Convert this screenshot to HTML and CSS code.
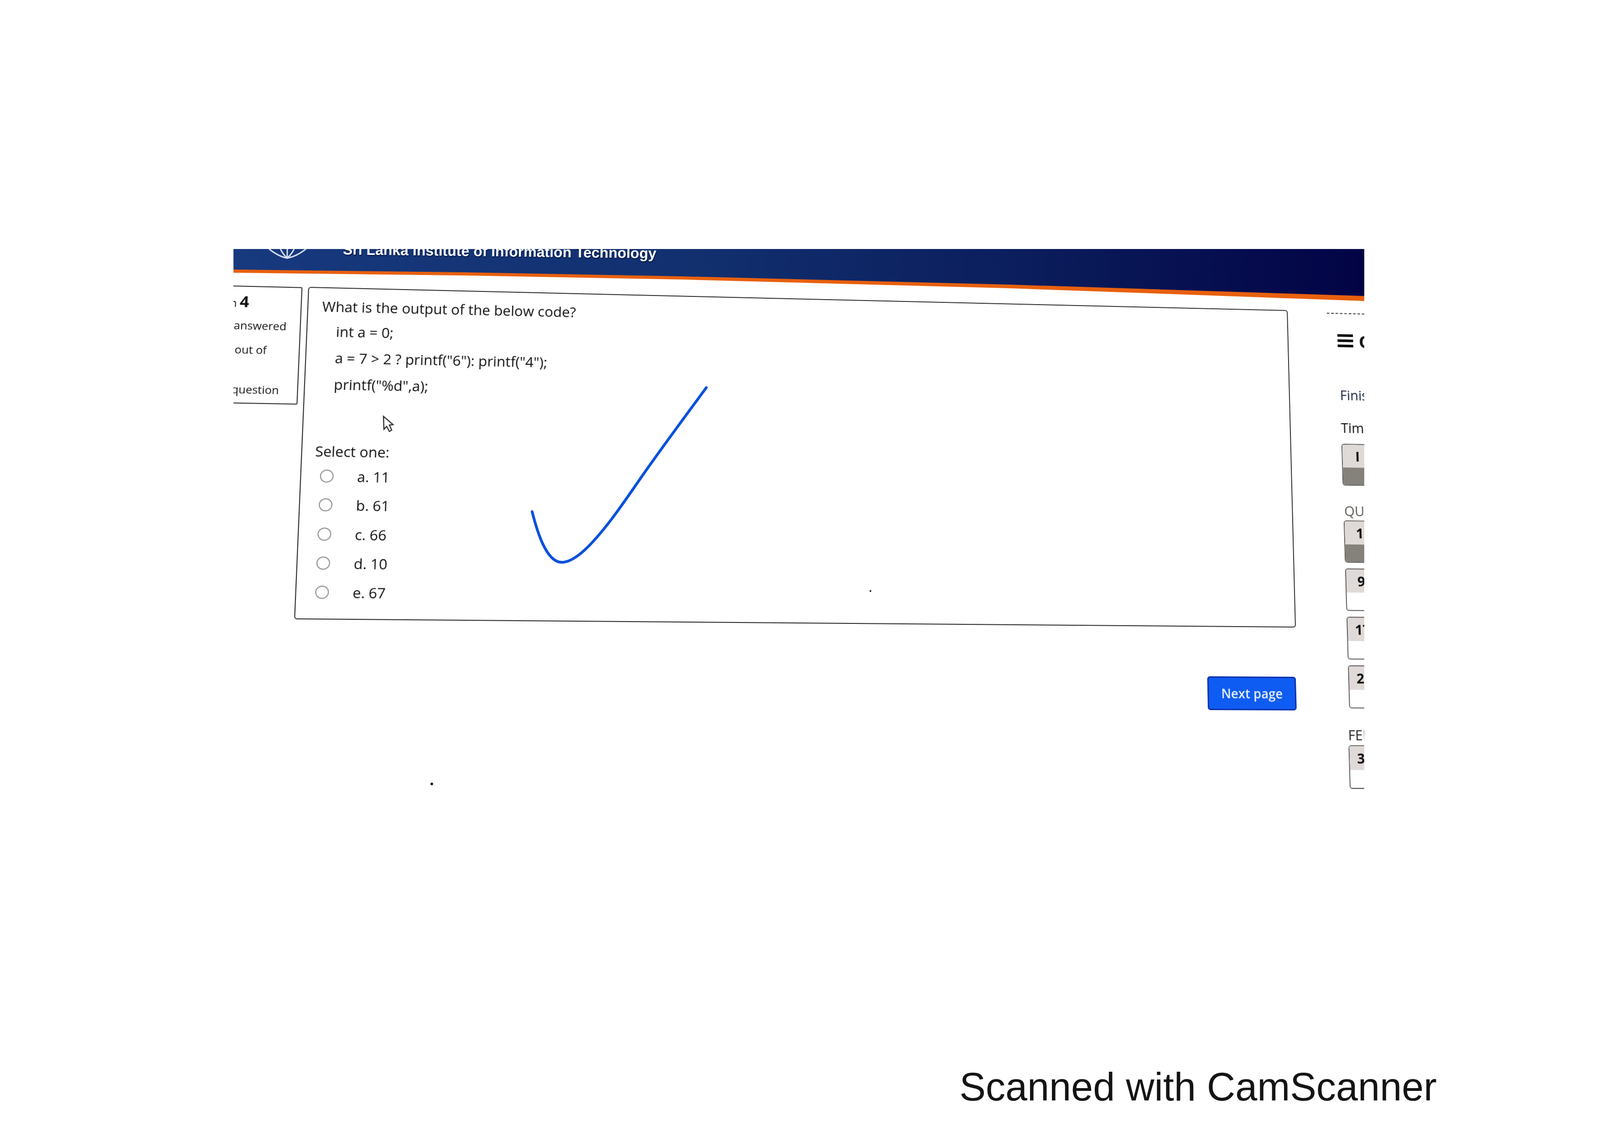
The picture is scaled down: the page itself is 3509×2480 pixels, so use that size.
FILE: index.html
```html
<!DOCTYPE html>
<html>
<head>
  <meta charset="utf-8">
  <title>Scanned quiz page</title>
  <link rel="stylesheet" href="styles.css">
</head>
<body>
  <div class="page">
    <div class="photo">
      <!-- Site banner -->
      <div class="banner">
        <div class="banner-fill">
          <svg class="crest" viewBox="0 0 90 22" width="90" height="22">
            <path d="M3 0Q25 17 43 20Q62 17 84 0M28 0Q34 12 43 20Q52 12 58 0M43 0V20"></path>
          </svg>
          <span class="banner-title">Sri Lanka Institute of Information Technology</span>
        </div>
      </div>

      <!-- The monitor, warped the way the camera saw it -->
      <div class="screen">
        <div class="info">
          <h3 class="info-title">Question <b>4</b></h3>
          <div class="info-line status">Not yet answered</div>
          <div class="info-line marks">Marked out of</div>
          <div class="info-line flag">Flag question</div>
        </div>

        <main class="content">
          <div class="card">
            <p class="prompt">What is the output of the below code?</p>
            <div class="code">
              <div>int a = 0;</div>
              <div>a = 7 &gt; 2 ? printf("6"): printf("4");</div>
              <div>printf("%d",a);</div>
            </div>
            <div class="select-label">Select one:</div>
            <label class="option"><input type="radio" name="answer">a. 11</label>
            <label class="option"><input type="radio" name="answer">b. 61</label>
            <label class="option"><input type="radio" name="answer">c. 66</label>
            <label class="option"><input type="radio" name="answer">d. 10</label>
            <label class="option"><input type="radio" name="answer">e. 67</label>
          </div>
          <button type="button" class="next-btn">Next page</button>
        </main>

        <aside class="side">
          <div class="side-rule"></div>
          <h2 class="side-title">
            <svg viewBox="0 0 36 30" width="36" height="30"><path d="M0 3H36M0 15H36M0 27H36"></path></svg>
            Quiz navigation
          </h2>
          <div class="side-text finish">Finish attempt</div>
          <div class="side-text timer">Time left</div>
          <div class="qbox done"><span>I</span><i></i></div>
          <div class="side-section quiz">QUIZ</div>
          <div class="qgrid">
            <div class="qbox done"><span>1</span><i></i></div>
            <div class="qbox"><span>9</span><i></i></div>
            <div class="qbox"><span>17</span><i></i></div>
            <div class="qbox"><span>25</span><i></i></div>
          </div>
          <div class="side-section feedback">FEEDBACK</div>
          <div class="qbox last"><span>33</span><i></i></div>
        </aside>
      </div>
    </div>

    <!-- Pen mark, mouse pointer and dust sit on top of the scan -->
    <svg class="marks-layer" viewBox="0 0 3509 2480">
      <path class="tick" d="M1167 1122C1178 1165 1198 1233 1232 1233C1262 1233 1300 1192 1340 1140C1372 1098 1401 1053 1430 1013C1470 957 1510 903 1549 850"></path>
      <path class="pointer" d="M841 913L842 941L848 935L854 946L859 943L854 932L862 931Z"></path>
      <circle class="dust" cx="947" cy="1719" r="3"></circle>
      <circle class="dust" cx="1909" cy="1296" r="2"></circle>
    </svg>

    <div class="scan-note">Scanned with CamScanner</div>
  </div>
</body>
</html>
```

FILE: styles.css
```css
/* Scan of a photographed quiz page */
body {
  margin: 0;
  background: #ffffff;
  font-family: 'Open Sans', 'Noto Sans', sans-serif;
  color: #111111;
}
.page {
  position: relative;
  display: flex;
  flex-direction: column;
  width: 3509px;
  height: 2480px;
  overflow: hidden;
}
.photo {
  position: relative;
  flex: none;
  width: 2480px;
  height: 1400px;
  margin: 546px 0 0 512px;
  overflow: hidden;
}

/* Banner */
.banner {
  position: absolute;
  top: 0;
  left: 0;
  z-index: 2;
  width: 100%;
  height: 120px;
  background: #e8600f;
  clip-path: polygon(0 0, 2480px 0, 2480px 114px, 1700px 86px, 988px 67px, 500px 58px, 0 52px);
}
.banner-fill {
  display: flex;
  height: 120px;
  background: linear-gradient(90deg, #17397e 0%, #12306f 40%, #0b1d5c 70%, #020345 100%);
  clip-path: polygon(0 0, 2480px 0, 2480px 103px, 1700px 78px, 988px 60px, 500px 51px, 0 45px);
}
.crest {
  flex: none;
  margin-left: 75px;
}
.crest path {
  fill: none;
  stroke: #d5def2;
  stroke-width: 3;
}
.banner-title {
  height: 40px;
  margin: -19px 0 0 75px;
  font-family: 'Liberation Sans', Arial, sans-serif;
  font-size: 32px;
  font-weight: bold;
  line-height: 40px;
  color: #ffffff;
  text-shadow: 1px 2px 2px #00123f;
  white-space: nowrap;
  transform: rotate(0.7deg);
  transform-origin: 0 50%;
}

/* Screen: local layout is flat, matrix3d gives the camera angle */
.screen {
  display: flex;
  align-items: flex-start;
  width: 2900px;
  padding-top: 83px;
  font-size: 30.5px;
  transform-origin: 164px 83px;
  transform: matrix3d(1.047028, 0.024857, 0, 0.000022326, -0.042082, 0.989516, 0, -0.00003152, 0, 0, 1, 0, 0, 0, 0, 1);
}

/* Left info block */
.info {
  flex: none;
  box-sizing: border-box;
  width: 241.5px;
  height: 258px;
  margin: 1px 12.5px 0 -90px;
  padding: 10px 0 0 15px;
  border: 2px solid #2b2b2b;
  border-left: none;
  border-radius: 0 3px 3px 0;
  font-size: 24px;
  white-space: nowrap;
}
.info-title {
  margin: 0 0 0 -6px;
  font-size: 23px;
  font-weight: normal;
  line-height: 44px;
}
.info-title b {
  font-size: 34px;
}
.info-line {
  line-height: 36px;
}
.status {
  margin-top: 9px;
}
.marks {
  margin-top: 17px;
}
.flag {
  margin: 51px 0 0 38px;
}

/* Question card */
.content {
  flex: none;
  display: flex;
  flex-direction: column;
  width: 2150px;
}
.card {
  box-sizing: border-box;
  height: 720px;
  padding-top: 14px;
  border: 2px solid #2b2b2b;
  border-radius: 6px;
}
.prompt {
  margin: 0 0 0 29px;
  line-height: 52px;
}
.code {
  margin: 0 0 0 60px;
  line-height: 58px;
}
.select-label {
  margin: 97px 0 3px 27px;
  line-height: 40px;
}
.option {
  display: flex;
  align-items: center;
  height: 62.25px;
  margin-left: 39px;
}
.option input {
  box-sizing: border-box;
  width: 28px;
  height: 28px;
  margin: 0 49px 0 0;
  border: 2px solid #8d8787;
  border-radius: 50%;
  background: #ffffff;
  appearance: none;
}
.next-btn {
  align-self: flex-end;
  width: 198px;
  height: 74px;
  margin: 109px 3px 0 0;
  padding: 0;
  border: 3px solid #0b2fae;
  border-radius: 6px;
  background: #0f5cf2;
  color: #e6f0ff;
  font-family: inherit;
  font-size: 28px;
  font-weight: 600;
}

/* Right navigation column */
.side {
  flex: none;
  width: 400px;
  margin: 4px 0 0 115px;
  white-space: nowrap;
}
.side-rule {
  width: 300px;
  margin-left: -25px;
  border-top: 2px dashed #333333;
}
.side-title {
  display: flex;
  align-items: center;
  gap: 13px;
  height: 30px;
  margin: 47px 0 0 -2px;
  font-size: 40px;
  font-weight: bold;
  color: #111111;
}
.side-title svg {
  flex: none;
}
.side-title path {
  fill: none;
  stroke: #0c0c0c;
  stroke-width: 6;
}
.side-text,
.side-section {
  line-height: 34px;
}
.finish {
  margin-top: 93px;
  color: #16233f;
}
.timer {
  margin: 41px 0 20px;
}
.quiz {
  margin: 40px 0 5px 2px;
  color: #5b5b55;
}
.feedback {
  margin: 41px 0 6px -4px;
  color: #222222;
}
.qgrid {
  display: flex;
  flex-direction: column;
  gap: 13px;
}
.qbox {
  display: flex;
  flex-direction: column;
  box-sizing: border-box;
  width: 72px;
  height: 95px;
  overflow: hidden;
  border: 2px solid #5c5a5a;
  border-radius: 6px;
  background: #ffffff;
  font-weight: bold;
  text-align: center;
}
.qbox.last {
  margin-left: -4px;
}
.qbox span {
  height: 52px;
  background: #dfd9d7;
  color: #0c0c0c;
  line-height: 52px;
}
.qbox i {
  flex: 1;
}
.qbox.done i {
  background: #85817b;
}

/* Overlay marks */
.marks-layer {
  position: absolute;
  top: 0;
  left: 0;
  width: 3509px;
  height: 2480px;
}
.tick {
  fill: none;
  stroke: #0a50dc;
  stroke-width: 6;
  stroke-linecap: round;
}
.pointer {
  fill: #ffffff;
  stroke: #333333;
  stroke-width: 2.5;
}
.dust {
  fill: #222222;
}

.scan-note {
  align-self: flex-end;
  margin: auto 358px 47px 0;
  font-family: 'Liberation Sans', Arial, sans-serif;
  font-size: 86.4px;
  line-height: 100px;
  color: #141414;
}
```
